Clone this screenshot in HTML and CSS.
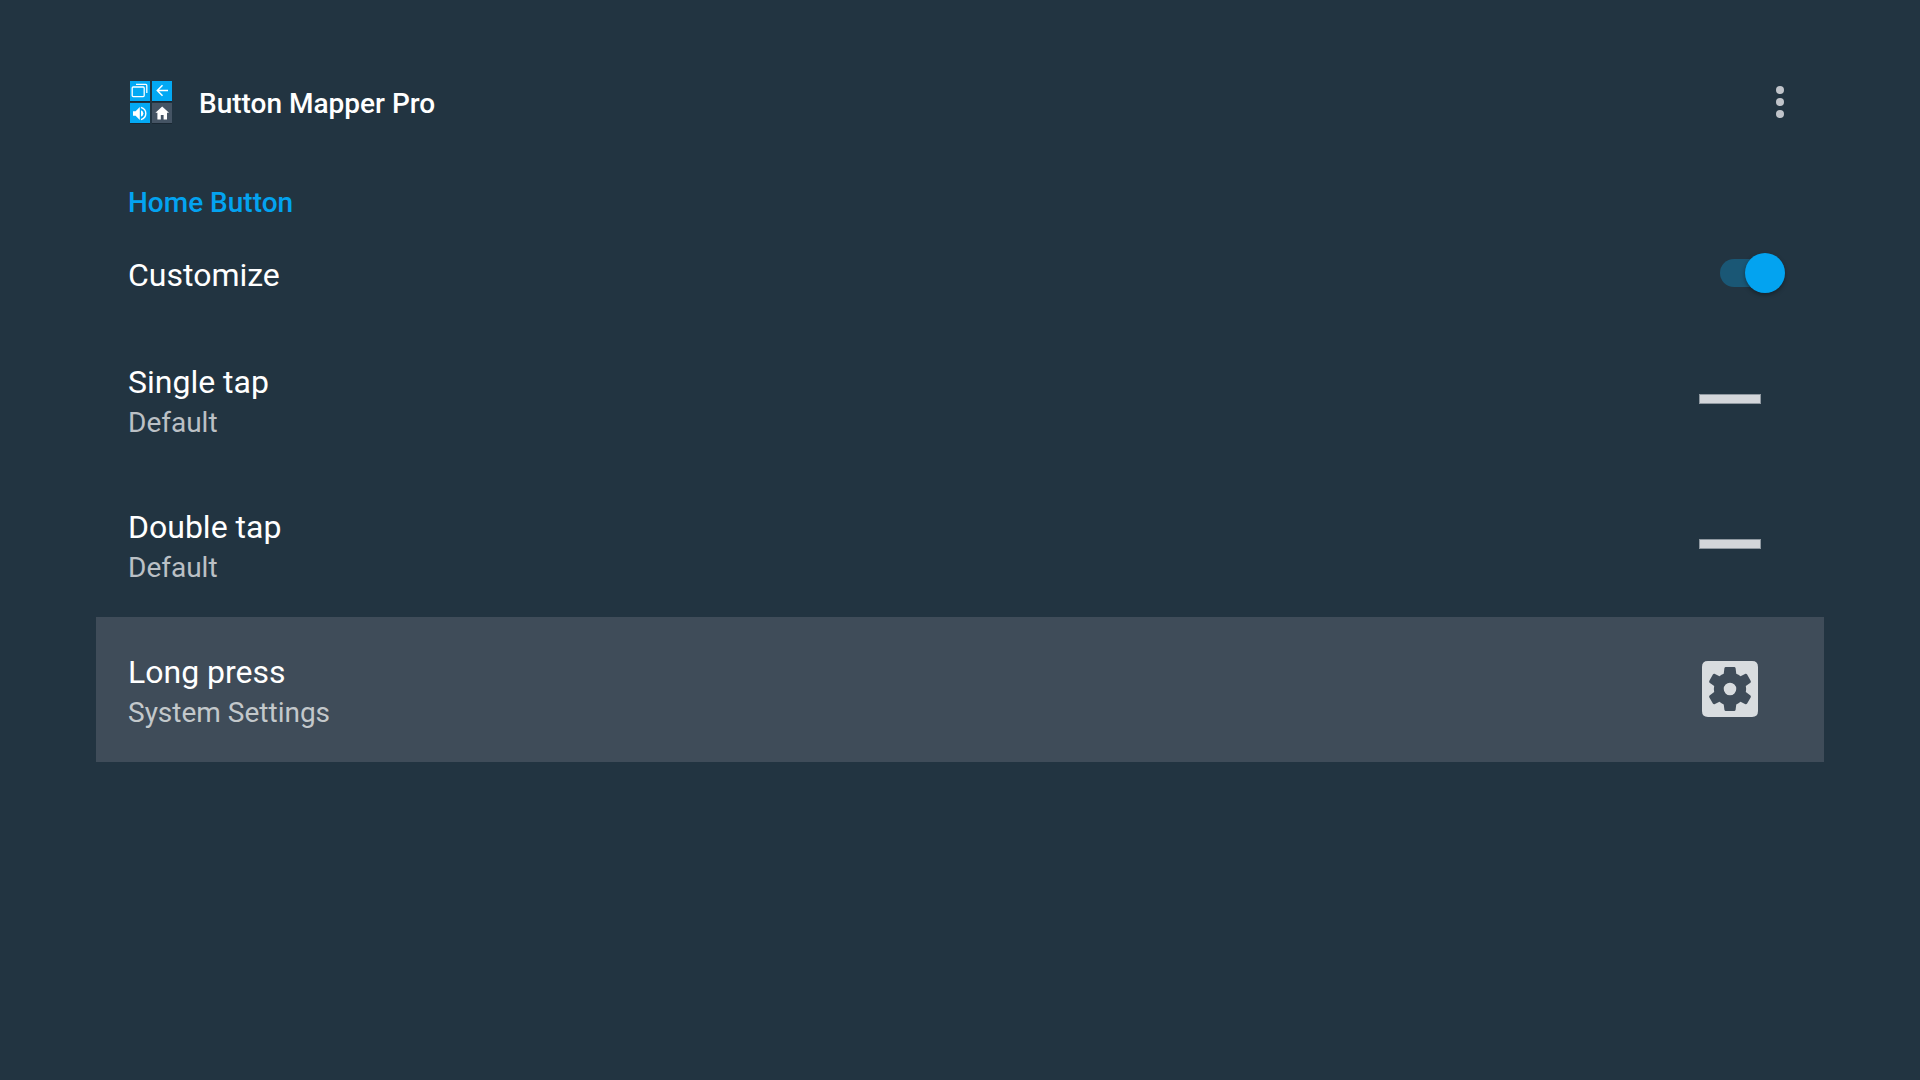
FILE: index.html
```html
<!DOCTYPE html>
<html lang="en">
<head>
<meta charset="utf-8">
<meta name="viewport" content="width=device-width, initial-scale=1">
<title>Button Mapper Pro</title>
<link rel="stylesheet" href="styles.css">
</head>
<body>
<header class="app-bar">
  <svg class="logo" viewBox="0 0 44 44" aria-hidden="true">
    <path fill="#1a2833" d="M1 2h20v20H1zM23 2h20v20H23zM1 24h20v20H1zM23 24h20v20H23z"/>
    <path fill="#03a9f4" d="M1 1h20v20H1zM23 1h20v20H23zM1 23h20v20H1z"/>
    <path fill="#455464" d="M23 23h20v20H23z"/>
    <g fill="none" stroke="#fff" stroke-width="1.3">
      <rect x="3.2" y="7" width="12" height="9.6" rx="1"/>
      <path d="M7 4.4h9.8q1 0 1 1V13"/>
      <path stroke-width="1.5" d="M39 10.5H28.5M33.5 5.2l-5.2 5.3 5.2 5.3"/>
    </g>
    <path fill="#fff" d="M4 31.2h2.6l4.2-4.2v13l-4.2-4.2H4z"/>
    <path fill="#fff" d="M12 30.2q2.4 1 2.4 3.3T12 36.8z"/>
    <path fill="none" stroke="#fff" stroke-width="1.4" d="M12 27.4q4.8 1.6 4.8 6.1T12 39.6"/>
    <path fill="#fff" d="M33.2 26.5l6.8 6.2h-2v6.8h-3.4V35h-2.8v4.5h-3.4v-6.8h-2z"/>
  </svg>
  <h1 class="app-title">Button Mapper Pro</h1>
  <button class="menu-button" type="button" aria-label="More options">
    <svg class="dots" viewBox="0 0 8 32" aria-hidden="true"><circle cx="4" cy="4" r="4"/><circle cx="4" cy="16" r="4"/><circle cx="4" cy="28" r="4"/></svg>
  </button>
</header>
<main>
  <h2 class="section-title">Home Button</h2>
  <div class="row row-switch">
    <label class="row-title switch-label" for="customize">Customize</label>
    <input class="switch" type="checkbox" role="switch" id="customize" checked>
  </div>
  <button class="row" type="button">
    <span class="row-text"><span class="row-title">Single tap</span><span class="row-summary">Default</span></span>
    <span class="row-icon"><span class="dash"></span></span>
  </button>
  <button class="row" type="button">
    <span class="row-text"><span class="row-title">Double tap</span><span class="row-summary">Default</span></span>
    <span class="row-icon"><span class="dash"></span></span>
  </button>
  <button class="row row-focused" type="button">
    <span class="row-text"><span class="row-title">Long press</span><span class="row-summary">System Settings</span></span>
    <span class="row-icon">
      <svg class="gear" viewBox="65 62 170 170" aria-hidden="true">
        <path fill-rule="evenodd" d="M83 62H217Q235 62 235 80V214Q235 232 217 232H83Q65 232 65 214V80Q65 62 83 62Z
          M137 80Q134 80 133 84L131 101Q124 103 118 108L103 101Q100 100 98 103L87 123Q86 126 88 128L102 138Q100 147 102 156L88 167Q86 169 87 172L98 191Q100 194 103 193L118 186Q124 191 131 194L133 210Q134 214 137 214H163Q166 214 167 210L169 194Q176 191 182 186L197 193Q200 194 202 191L213 172Q214 169 212 167L198 156Q200 147 198 138L212 128Q214 126 213 123L202 103Q200 100 197 101L182 108Q176 103 169 101L167 84Q166 80 163 80Z
          M150 128A19 19 0 1 1 150 166A19 19 0 1 1 150 128Z"/>
      </svg>
    </span>
  </button>
</main>
</body>
</html>
```
FILE: styles.css
```css
* { box-sizing: border-box; }

body {
  margin: 0;
  min-height: 100vh;
  padding: 54px 5%;
  background: #223441;
  color: #fff;
  font-family: Roboto, "Noto Sans", sans-serif;
  font-size: 28px;
}

.app-bar {
  display: flex;
  align-items: center;
  height: 96px;
  padding: 0 32px;
}

.logo { width: 44px; height: 44px; margin-left: 1px; }

.app-title {
  flex: 1;
  margin: 0;
  padding: 4px 0 0 26px;
  font-size: 28px;
  line-height: 36px;
  font-weight: 500;
}

.menu-button {
  display: flex;
  justify-content: center;
  width: 24px;
  padding: 8px 0;
  border: 0;
  background: none;
}

.dots { width: 8px; height: 32px; fill: #c0c4ca; }

.section-title {
  margin: 0;
  padding: 36px 32px 0;
  font-size: 28px;
  line-height: 34px;
  font-weight: 500;
  color: #03a3f0;
}

.row {
  display: flex;
  align-items: center;
  width: 100%;
  min-height: 145px;
  padding: 0 62px 0 32px;
  border: 0;
  background: none;
  color: inherit;
  font: inherit;
  text-align: left;
}

.row-focused { background: #3f4c59; }

.row-switch {
  min-height: 107px;
  padding-right: 39px;
  padding-bottom: 2px;
}

.row-text {
  flex: 1;
  display: flex;
  flex-direction: column;
  padding-top: 6px;
}

.row-title { font-size: 32px; line-height: 40px; }
.row-summary { line-height: 42px; color: #bbc0c5; }
.row-focused .row-summary { color: #c3c8cb; }

.switch-label { flex: 1; padding-top: 4px; }

.switch {
  appearance: none;
  display: flex;
  align-items: center;
  justify-content: flex-end;
  width: 65px;
  height: 40px;
  margin: 0;
}

/* Track, running under the thumb */
.switch::before {
  content: "";
  width: 60px;
  height: 28px;
  margin-right: -35px;
  border-radius: 14px;
  background: #1a5775;
}

/* Thumb */
.switch::after {
  content: "";
  width: 40px;
  height: 40px;
  border-radius: 50%;
  background: #03a3f0;
  box-shadow: 0 2px 4px rgba(0, 0, 0, 0.35);
}

.row-icon {
  display: flex;
  align-items: center;
  justify-content: center;
  width: 64px;
  height: 64px;
  padding-bottom: 2px;
}

.dash {
  width: 62px;
  height: 10px;
  border: 1px solid #8f98a0;
  background: #d3d6da;
}

.gear { width: 56px; height: 56px; fill: #d8dcdf; }
```
